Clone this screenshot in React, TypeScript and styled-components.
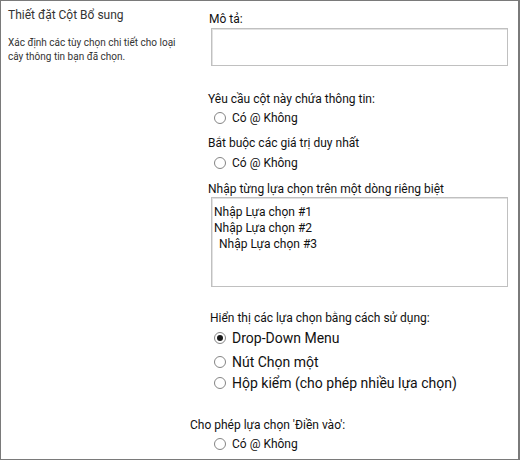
import styled, { createGlobalStyle } from "styled-components";

const GlobalStyle = createGlobalStyle`
  body {
    margin: 0;
    background: #ffffff;
  }
`;

const Frame = styled.div`
  box-sizing: border-box;
  width: 520px;
  height: 460px;
  border: 1px solid #7a7a7a;
  border-right-width: 2px;
  display: grid;
  grid-template-columns: 189px 1fr;
  font-family: Roboto, "Liberation Sans", sans-serif;
  color: #111;
  background: #fff;
`;

const Side = styled.div`
  padding: 6px 0 0 7px;
`;

const SideTitle = styled.div`
  font-size: 12px;
  line-height: 16px;
  color: #333;
`;

const SideText = styled.div`
  margin-top: 13px;
  font-size: 10px;
  line-height: 14px;
  color: #333;
`;

const Main = styled.div`
  padding-top: 10px;
  display: flex;
  flex-direction: column;
`;

const Label = styled.div<{ $gap: number; $indent: number }>`
  margin-top: ${(p) => p.$gap}px;
  padding-left: ${(p) => p.$indent}px;
  font-size: 12px;
  line-height: 16px;
  white-space: nowrap;
`;

const TextBox = styled.div<{ $gap: number; $height: number }>`
  box-sizing: border-box;
  margin-top: ${(p) => p.$gap}px;
  margin-left: 21px;
  width: 297px;
  height: ${(p) => p.$height}px;
  border: 1px solid #c0c0c0;
  box-shadow: inset 1px 1px 0 #e2e2e2;
  padding: 6px 0 0 2px;
  font-size: 12px;
  line-height: 16px;
`;

const ChoiceLine = styled.div<{ $indent?: number }>`
  padding-left: ${(p) => p.$indent ?? 0}px;
  white-space: nowrap;
`;

const RadioRow = styled.div<{ $gap: number; $size: number }>`
  margin-top: ${(p) => p.$gap}px;
  padding-left: 24px;
  display: flex;
  align-items: center;
  gap: 6px;
  height: ${(p) => (p.$size > 12 ? 20 : 16)}px;
  font-size: ${(p) => p.$size}px;
  white-space: nowrap;
`;

const Radio = styled.span<{ $checked?: boolean }>`
  box-sizing: border-box;
  width: 12px;
  height: 12px;
  border-radius: 50%;
  border: 1px solid #858585;
  background: #fff;
  display: inline-flex;
  align-items: center;
  justify-content: center;
  flex: none;
  &::after {
    content: "";
    width: 6px;
    height: 6px;
    border-radius: 50%;
    background: ${(p) => (p.$checked ? "#1a1a1a" : "transparent")};
  }
`;

const App = () => {
  return (
    <>
      <GlobalStyle />
      <Frame>
        <Side>
          <SideTitle>Thiết đặt Cột Bổ sung</SideTitle>
          <SideText>
            Xác định các tùy chọn chi tiết cho loại
            <br />
            cây thông tin bạn đã chọn.
          </SideText>
        </Side>
        <Main>
          <Label $gap={0} $indent={19}>
            Mô tả:
          </Label>
          <TextBox $gap={1} $height={38} />

          <Label $gap={25} $indent={18}>
            Yêu cầu cột này chứa thông tin:
          </Label>
          <RadioRow $gap={3} $size={12}>
            <Radio />
            Có @ Không
          </RadioRow>

          <Label $gap={9} $indent={18}>
            Bắt buộc các giá trị duy nhất
          </Label>
          <RadioRow $gap={4} $size={12}>
            <Radio />
            Có @ Không
          </RadioRow>

          <Label $gap={10} $indent={18}>
            Nhập từng lựa chọn trên một dòng riêng biệt
          </Label>
          <TextBox $gap={0} $height={90}>
            <ChoiceLine>Nhập Lựa chọn #1</ChoiceLine>
            <ChoiceLine>Nhập Lựa chọn #2</ChoiceLine>
            <ChoiceLine $indent={5}>Nhập Lựa chọn #3</ChoiceLine>
          </TextBox>

          <Label $gap={23} $indent={20}>
            Hiển thị các lựa chọn bằng cách sử dụng:
          </Label>
          <RadioRow $gap={2} $size={14}>
            <Radio $checked />
            Drop-Down Menu
          </RadioRow>
          <RadioRow $gap={4} $size={14}>
            <Radio />
            Nút Chọn một
          </RadioRow>
          <RadioRow $gap={1} $size={14}>
            <Radio />
            Hộp kiểm (cho phép nhiều lựa chọn)
          </RadioRow>

          <Label $gap={24} $indent={0}>
            Cho phép lựa chọn 'Điền vào':
          </Label>
          <RadioRow $gap={3} $size={12}>
            <Radio />
            Có @ Không
          </RadioRow>
        </Main>
      </Frame>
    </>
  );
};

export default App;
